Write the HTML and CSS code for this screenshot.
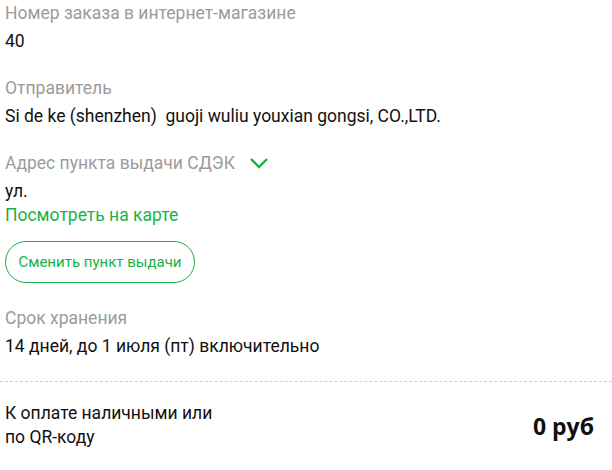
FILE: index.html
```html
<!DOCTYPE html>
<html lang="ru">
<head>
<meta charset="utf-8">
<link rel="stylesheet" href="styles.css">
</head>
<body>
<div class="panel">
  <div class="field">
    <div class="label">Номер заказа в интернет-магазине</div>
    <div class="value">40</div>
  </div>
  <div class="field">
    <div class="label">Отправитель</div>
    <div class="value">Si de ke (shenzhen)&nbsp; guoji wuliu youxian gongsi, CO.,LTD.</div>
  </div>
  <div class="field">
    <div class="label label-row">Адрес пункта выдачи СДЭК
      <svg class="chev" width="20" height="12" viewBox="0 0 20 12"><path d="M2 2 L10 10 L18 2" fill="none" stroke="#1ab248" stroke-width="2.4"/></svg>
    </div>
    <div class="value">ул.</div>
    <div class="link">Посмотреть на карте</div>
    <button class="btn">Сменить пункт выдачи</button>
  </div>
  <div class="field">
    <div class="label">Срок хранения</div>
    <div class="value">14 дней, до 1 июля (пт) включительно</div>
  </div>
  <div class="total">
    <div class="total-label">К оплате наличными или<br>по QR-коду</div>
    <div class="total-sum">0 руб</div>
  </div>
</div>
</body>
</html>
```
FILE: styles.css
```css
html, body { margin: 0; padding: 0; background: #fff; }
body { font-family: Roboto, "Noto Sans", sans-serif; font-size: 17.5px; color: #111; }
.panel { padding: 1px 0 0 5px; width: 607px; }
.field { margin-bottom: 23px; }
.label { color: #9b9b9b; line-height: 24px; margin-bottom: 4px; }
.label-row { display: flex; align-items: center; gap: 14px; }
.chev { display: block; margin-top: -1px; }
.value { line-height: 24px; }
.link { color: #1ab248; line-height: 24px; }
.btn {
  margin-top: 14px;
  height: 42px; width: 190px;
  border: 1px solid #1ab248; border-radius: 21px;
  background: #fff; color: #1ab248;
  font-family: Roboto, sans-serif; font-size: 15px;
  padding: 0; cursor: pointer;
}
.total {
  margin-left: -5px; padding: 19px 18px 0 5px;
  border-top: 1px dashed #cfcfcf;
  display: flex; justify-content: space-between; align-items: center;
}
.total-label { line-height: 24px; }
.total-sum { font-family: "Open Sans", sans-serif; font-weight: 700; font-size: 23px; margin-top: 2px; }
```
